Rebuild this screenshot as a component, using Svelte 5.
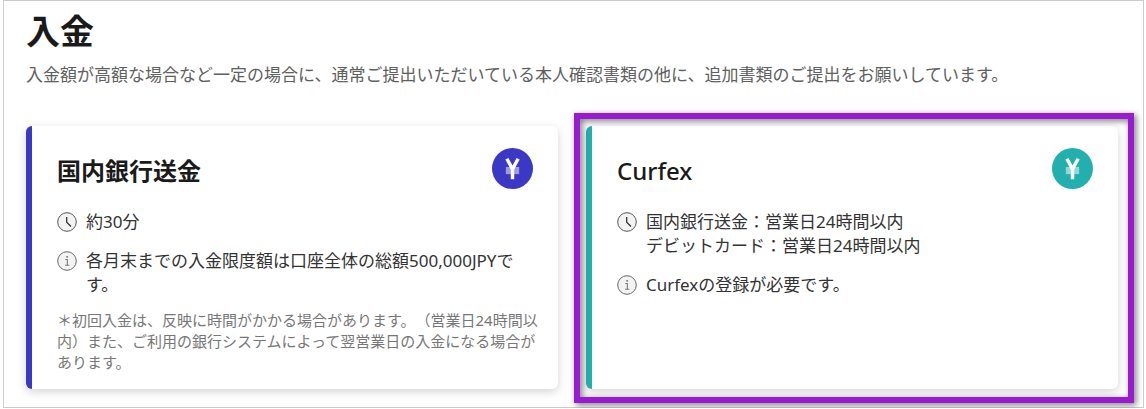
<script>
  const methods = [
    {
      title: '国内銀行送金',
      tone: 'indigo',
      time: ['約30分'],
      info: '各月末までの入金限度額は口座全体の総額500,000JPYです。',
      note: '＊初回入金は、反映に時間がかかる場合があります。（営業日24時間以内）また、ご利用の銀行システムによって翌営業日の入金になる場合があります。',
      selected: false
    },
    {
      title: 'Curfex',
      tone: 'teal',
      time: ['国内銀行送金：営業日24時間以内', 'デビットカード：営業日24時間以内'],
      info: 'Curfexの登録が必要です。',
      note: '',
      selected: true
    }
  ];
</script>

<main>
  <h1>入金</h1>
  <p class="lead">入金額が高額な場合など一定の場合に、通常ご提出いただいている本人確認書類の他に、追加書類のご提出をお願いしています。</p>

  <div class="cards">
    {#each methods as m}
      <section class="slot">
        <article class="card {m.tone}">
          <header>
            <h2>{m.title}</h2>
            <svg class="coin" viewBox="0 0 40 40" aria-hidden="true">
              <circle cx="20" cy="20" r="20" fill="currentColor" />
              <path d="M13.5 18.5h13v7h-13z" fill="#fff" opacity="0.5" />
              <path d="M14.5 10.5 20 20.5 25.5 10.5M20 19v11.5" fill="none" stroke="#fff" stroke-width="3.4" />
            </svg>
          </header>
          <ul>
            <li>
              <svg class="mark" viewBox="0 0 20 20" aria-hidden="true">
                <circle cx="10" cy="10" r="9.3" fill="#f3f3f3" stroke="#555" />
                <path d="M9.7 5v5.2l4.3 4.3" fill="none" stroke="#333" stroke-width="1.3" />
              </svg>
              <span>{#each m.time as line}<span class="line">{line}</span>{/each}</span>
            </li>
            <li>
              <svg class="mark" viewBox="0 0 20 20" aria-hidden="true">
                <circle cx="10" cy="10" r="9.3" fill="#f3f3f3" stroke="#666" />
                <path d="M8.3 8.5h2v5.5M8 14.2h4.4" fill="none" stroke="#777" stroke-width="1.1" />
                <circle cx="10.1" cy="5.8" r="0.9" fill="#666" />
              </svg>
              <span>{m.info}</span>
            </li>
          </ul>
          {#if m.note}<p class="note">{m.note}</p>{/if}
        </article>
        {#if m.selected}<div class="highlight"></div>{/if}
      </section>
    {/each}
  </div>
</main>

<style>
  :global(body) {
    background: #fff;
  }
  main {
    box-sizing: border-box;
    margin: 0 2px 0 3px;
    padding: 8px 25px 18px 22px;
    border: 1px solid #ccc;
    color: #222;
    font: 17px/24px 'Noto Sans', 'Noto Sans CJK JP', sans-serif;
    text-spacing-trim: space-all;
  }
  h1, h2, p, ul {
    margin: 0;
    padding: 0;
  }
  h1 {
    font-size: 34px;
    line-height: 44px;
    font-weight: 700;
    color: #1a1a1a;
  }
  .lead {
    margin-top: 10px;
    color: #606060;
  }
  .cards {
    display: grid;
    grid-template-columns: 1fr 1fr;
    gap: 28px;
    margin-top: 39px;
  }
  .slot {
    position: relative;
    display: flex;
  }
  .card {
    box-sizing: border-box;
    flex: 1;
    padding: 22px 25px 16px;
    border-left: 6px solid currentColor;
    border-radius: 6px;
    background: #fff;
    box-shadow: 0 3px 10px rgba(0, 0, 0, 0.17);
  }
  .indigo {
    color: #3a38c4;
  }
  .teal {
    color: #22b0ae;
  }
  header {
    display: flex;
    justify-content: space-between;
    height: 40px;
  }
  h2 {
    font-size: 24px;
    line-height: 46px;
    font-weight: 500;
    color: #1a1a1a;
  }
  .indigo h2 {
    font-weight: 700;
  }
  .coin {
    width: 41px;
    height: 41px;
  }
  ul {
    display: grid;
    gap: 15px;
    margin-top: 22px;
    list-style: none;
    color: #333;
  }
  li {
    display: flex;
    gap: 9px;
  }
  .mark {
    flex: none;
    width: 20px;
    height: 20px;
    margin-top: 2px;
  }
  .line {
    display: block;
  }
  .note {
    margin: 13px -14px 0 0;
    font-size: 15px;
    line-height: 21px;
    color: #777;
  }
  .highlight {
    position: absolute;
    inset: -13px -16px -14px -12px;
    border: 6px solid #981bcf;
    filter: drop-shadow(2px 2px 3px rgba(0, 0, 0, 0.55));
    pointer-events: none;
  }
</style>
